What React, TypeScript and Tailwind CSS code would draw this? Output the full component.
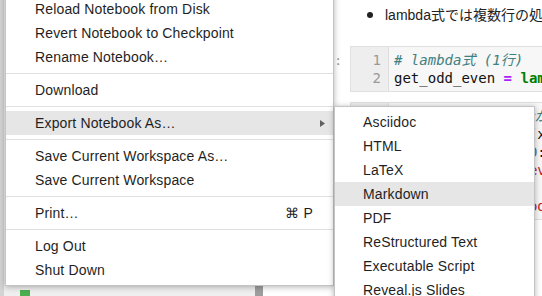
import React from "react";

type Item = { label: string; shortcut?: string; submenu?: boolean; active?: boolean };

const mainGroups: Item[][] = [
  [
    { label: "Reload Notebook from Disk" },
    { label: "Revert Notebook to Checkpoint" },
    { label: "Rename Notebook…" },
  ],
  [{ label: "Download" }],
  [{ label: "Export Notebook As…", submenu: true, active: true }],
  [{ label: "Save Current Workspace As…" }, { label: "Save Current Workspace" }],
  [{ label: "Print…", shortcut: "⌘ P" }],
  [{ label: "Log Out" }, { label: "Shut Down" }],
];

const exportItems = [
  "Asciidoc",
  "HTML",
  "LaTeX",
  "Markdown",
  "PDF",
  "ReStructured Text",
  "Executable Script",
  "Reveal.js Slides",
];

const ui = { fontFamily: '"Liberation Sans", Arial, sans-serif' };
const mono = { fontFamily: '"DejaVu Sans Mono", "Noto Sans CJK JP", monospace' };

function MenuRow({ item }: { item: Item }) {
  return (
    <div
      className={`flex h-6 items-center pl-[29px] text-[14px] tracking-[0.15px] text-[#1f1f1f] ${
        item.active ? "bg-[#e6e6e6]" : ""
      }`}
    >
      <span className="flex-1 whitespace-nowrap">{item.label}</span>
      {item.shortcut && <span className="pr-[20px]">{item.shortcut}</span>}
      {item.submenu && (
        <svg width="5" height="7" viewBox="0 0 5 7" className="mr-[8px]">
          <polygon points="0,0 5,3.5 0,7" fill="#616161" />
        </svg>
      )}
    </div>
  );
}

function Line({ n, children }: { n: number; children?: React.ReactNode }) {
  return (
    <div className="flex h-[18px] items-center">
      <span className="w-[38px] shrink-0 pr-[8px] text-right text-[#999]">{n}</span>
      <span className="whitespace-pre pl-[5px] text-[#111]">{children}</span>
    </div>
  );
}

export default function App() {
  return (
    <div className="relative h-[296px] w-[542px] overflow-hidden bg-white" style={ui}>
      <div className="flex h-full">
        {/* sidebar behind the menu */}
        <div className="flex w-[255px] shrink-0 flex-col justify-end border-l-[4px] border-[#d4d4d4] bg-[#efefef]">
          <div className="flex h-[10px] items-start gap-2 pl-[16px] pt-[4px]">
            <div className="h-[8px] w-[10px] bg-[#4caf50]" />
          </div>
        </div>
        <div className="w-[8px] shrink-0 bg-[#9e9e9e]" />

        {/* notebook */}
        <div className="flex-1 overflow-hidden bg-white pt-[3px] text-[14px]">
          <div className="flex">
            <div className="w-[87px] shrink-0" />
            <div className="flex h-6 items-center whitespace-nowrap pl-[17px]">
              <span className="h-[6px] w-[6px] rounded-full bg-[#222]" />
              <span
                className="pl-[12px] text-[#222]"
                style={{ fontFamily: '"Liberation Sans", "Noto Sans CJK JP", sans-serif' }}
              >
                lambda式では複数行の処理を書くことはできません
              </span>
            </div>
          </div>

          <div className="mt-[19px] flex" style={mono}>
            <div className="w-[87px] shrink-0 pr-[8px] pt-[5px] text-right text-[13px] text-[#999]">[ ]:</div>
            <div className="flex-1 border border-r-0 border-[#e0e0e0] bg-[#f7f7f7] text-[14px]">
              <div className="relative py-[4px]">
                <div className="absolute inset-y-0 left-0 w-[38px] border-r border-[#ddd] bg-[#eee]" />
                <div className="relative">
                  <Line n={1}>
                    <span className="italic text-[#408080]">{"# lambda式 (1行)"}</span>
                  </Line>
                  <Line n={2}>
                    {"get_odd_even "}
                    <span className="font-bold text-[#aa22ff]">=</span>{" "}
                    <span className="font-bold text-[#008000]">lambda</span>
                    {" x: 'even' if x % 2 == 0 else 'odd'"}
                  </Line>
                </div>
              </div>
            </div>
          </div>

          <div className="mt-[10px] flex" style={mono}>
            <div className="w-[87px] shrink-0 pr-[8px] pt-[5px] text-right text-[13px] text-[#999]">[ ]:</div>
            <div className="flex-1 border border-r-0 border-[#e0e0e0] bg-[#f7f7f7] text-[14px]">
              <div className="relative py-[4px]">
                <div className="absolute inset-y-0 left-0 w-[38px] border-r border-[#ddd] bg-[#eee]" />
                <div className="relative">
                  <Line n={1}>
                    <span className="italic text-[#408080]">{"# def文で書いた場合かなり長くなる"}</span>
                  </Line>
                  <Line n={2}>
                    <span className="font-bold text-[#008000]">def</span>
                    {" "}
                    <span className="text-[#0000ff]">get_odd_even</span>
                    {"(x):"}
                  </Line>
                  <Line n={3}>
                    {"    "}
                    <span className="font-bold text-[#008000]">if</span>
                    {" x "}
                    <span className="text-[#666]">%</span>
                    {" "}
                    <span className="text-[#666]">2</span>
                    {" "}
                    <span className="text-[#666]">==</span>
                    {" "}
                    <span className="text-[#666]">0</span>
                    {":"}
                  </Line>
                  <Line n={4}>
                    {"        "}
                    <span className="font-bold text-[#008000]">return</span>
                    {" "}
                    <span className="text-[#ba2121]">{"'even'"}</span>
                  </Line>
                  <Line n={5}>
                    {"    "}
                    <span className="font-bold text-[#008000]">else</span>
                    {":"}
                  </Line>
                  <Line n={6}>
                    {"        "}
                    <span className="font-bold text-[#008000]">return</span>
                    {" "}
                    <span className="text-[#ba2121]">{"'odd'"}</span>
                  </Line>
                </div>
              </div>
            </div>
          </div>
        </div>
      </div>

      {/* File menu */}
      <div className="absolute left-[5px] top-[-7px] w-[329px] border border-[#c4c4c4] bg-white py-[3px] shadow-[0_1px_6px_rgba(0,0,0,0.3)]">
        {mainGroups.map((group, gi) => (
          <div key={gi}>
            {gi > 0 && <div className="my-[4px] h-px bg-[#e0e0e0]" />}
            {group.map((item) => (
              <MenuRow key={item.label} item={item} />
            ))}
          </div>
        ))}
      </div>

      {/* Export submenu */}
      <div className="absolute left-[334px] top-[106px] w-[201px] border border-[#c4c4c4] bg-white pt-[3px] shadow-[0_1px_6px_rgba(0,0,0,0.3)]">
        {exportItems.map((label) => (
          <div
            key={label}
            className={`flex h-6 items-center whitespace-nowrap pl-[28px] text-[14px] tracking-[0.15px] text-[#1f1f1f] ${
              label === "Markdown" ? "bg-[#e6e6e6]" : ""
            }`}
          >
            {label}
          </div>
        ))}
      </div>
    </div>
  );
}
